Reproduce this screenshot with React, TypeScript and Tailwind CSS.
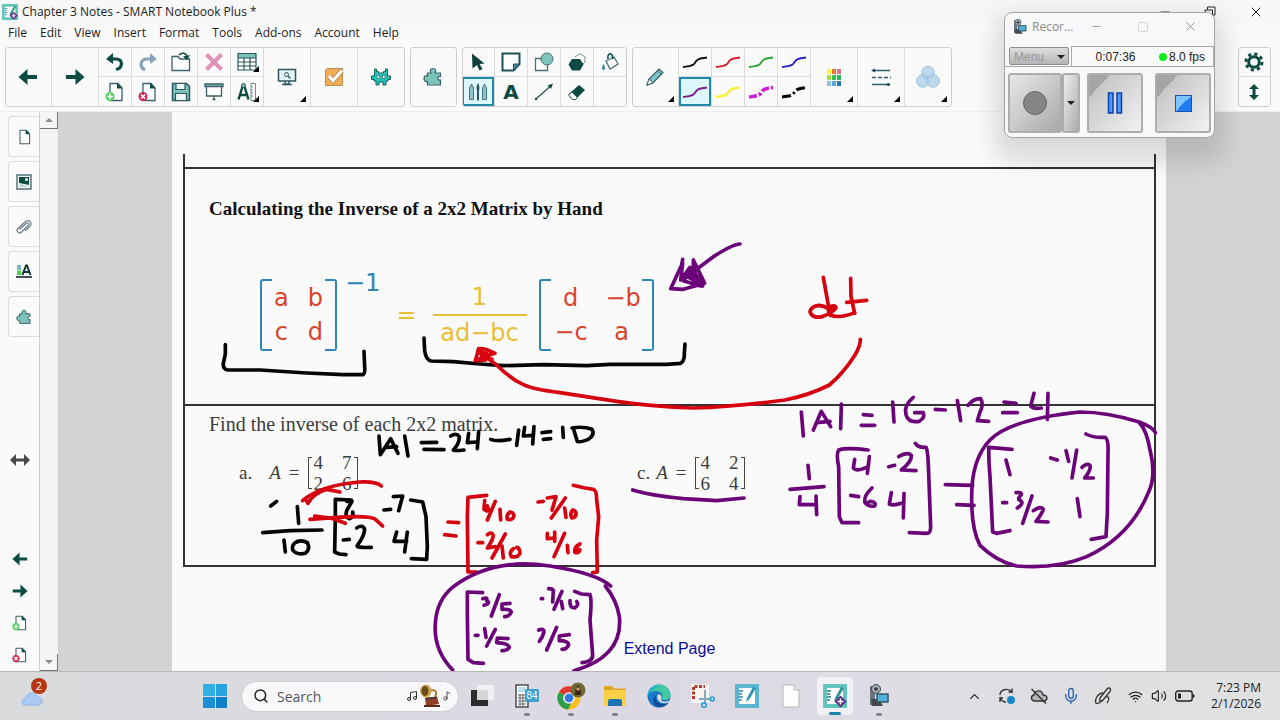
import React from "react";
import { ChevronUp, Mic, Minus, Music, Music2, Search, Square, Volume2, Wifi, X } from "lucide-react";

const menus = ["File", "Edit", "View", "Insert", "Format", "Tools", "Add-ons", "Account", "Help"];

/* ---------- toolbar pieces ---------- */

function Group({ children }: { children: React.ReactNode }) {
	return (
		<div className="flex h-[60px] shrink-0 overflow-hidden rounded-[3px] border border-[#cfcfcf] bg-[#fafafa]">
			{children}
		</div>
	);
}

function Corner() {
	return (
		<svg className="absolute right-1 bottom-1 size-1.5" viewBox="0 0 6 6">
			<path d="M6 0V6H0Z" fill="#000" />
		</svg>
	);
}

function Big({ label, more, children }: { label: string; more?: boolean; children: React.ReactNode }) {
	return (
		<button
			aria-label={label}
			className="relative flex h-full w-[47px] items-center justify-center border-r border-[#dadada] first:-ml-px last:-mr-px"
		>
			{children}
			{more && <Corner />}
		</button>
	);
}

function Column({ children }: { children: React.ReactNode }) {
	return (
		<div className="flex w-[33px] flex-col divide-y divide-[#dadada] border-r border-[#dadada] first:-ml-px last:-mr-px">
			{children}
		</div>
	);
}

function Small({ label, active, more, children }: { label: string; active?: boolean; more?: boolean; children?: React.ReactNode }) {
	return (
		<button
			aria-label={label}
			className={
				active
					? "relative flex h-[29px] w-full items-center justify-center bg-[#dcf8fc] shadow-[inset_0_0_0_2px_#2288a8]"
					: "relative flex h-[29px] w-full items-center justify-center"
			}
		>
			{children}
			{more && <Corner />}
		</button>
	);
}

/* ---------- icons ---------- */

function Arrow({ left, size }: { left?: boolean; size?: string }) {
	return (
		<svg className={size || "size-5"} viewBox="0 0 20 20">
			<path d={left ? "M.5 10L9.500 2V8H19V12H9.500V18Z" : "M19.500 10L10.500 2V8H1V12H10.500V18Z"} fill="#0c4b43" />
		</svg>
	);
}

function Turn({ redo }: { redo?: boolean }) {
	return (
		<svg className="size-5" viewBox="0 0 20 20">
			{redo ? (
				<g fill="none" stroke="#8ba3ba">
					<path d="M7 18C1 15 2 7 9 7H13" strokeWidth="3.200" />
					<path d="M12 1L19 7L12 12Z" fill="#8ba3ba" stroke="none" />
				</g>
			) : (
				<g fill="none" stroke="#0c4b43">
					<path d="M11 17.500C18 16 18.500 7 11 7H7" strokeWidth="3.200" />
					<path d="M8 1L1 7L8 12Z" fill="#0c4b43" stroke="none" />
				</g>
			)}
		</svg>
	);
}

function PageIcon({ badge, size }: { badge?: "add" | "del"; size?: string }) {
	return (
		<svg className={size || "size-5"} viewBox="0 0 20 20">
			<path d="M5 1.500H13L17 6V18.500H5Z" fill="#fff" stroke="#3c6069" strokeWidth="1.300" />
			<path d="M12 1V6.500H17.500Z" fill="#0c4b43" />
			{badge === "add" && (
				<g>
					<circle cx="5" cy="14.500" r="4.500" fill="#4fd05a" />
					<path d="M5 11.500V17.500M2 14.500H8" stroke="#fff" strokeWidth="1.500" />
				</g>
			)}
			{badge === "del" && (
				<g>
					<circle cx="5" cy="14.500" r="4.500" fill="#c92a54" />
					<path d="M3 12.500L7 16.500M7 12.500L3 16.500" stroke="#fff" strokeWidth="1.500" />
				</g>
			)}
		</svg>
	);
}

function OpenIcon() {
	return (
		<svg className="size-5" viewBox="0 0 20 20">
			<path d="M1 18.500V4.500H7L9 7H18.500V18.500Z" fill="#fff" stroke="#3c6069" strokeWidth="1.300" />
			<path d="M8 3C11 0 15 1 16 4" fill="none" stroke="#0c4b43" strokeWidth="1.600" />
			<path d="M12 4.500L19 3L16 8Z" fill="#0c4b43" />
		</svg>
	);
}

function DeleteIcon() {
	return (
		<svg className="size-5" viewBox="0 0 20 20">
			<path d="M2.500 2.500L17.500 17.500M17.500 2.500L2.500 17.500" stroke="#dd91b6" strokeWidth="4" />
		</svg>
	);
}

function TableIcon() {
	return (
		<svg className="size-5" viewBox="0 0 20 20">
			<path d="M1 1.500H19V18H1Z" fill="#fff" />
			<path d="M1 1.500H19V6H1Z" fill="#7cc4bb" />
			<path d="M1 1.500H19V18H1ZM1 6H19M1 10H19M1 14H19M7 6V18M13 6V18" fill="none" stroke="#2d5660" strokeWidth="1.200" />
		</svg>
	);
}

function SaveIcon() {
	return (
		<svg className="size-5" viewBox="0 0 20 20">
			<path d="M1.500 1.500H15.500L18.500 4.500V18.500H1.500Z" fill="#7cc4bb" stroke="#2d5660" strokeWidth="1.500" />
			<path d="M5 1.500H14V7.500H5ZM4.500 11.500H15.500V18.500H4.500Z" fill="#eef8f8" stroke="#2d5660" strokeWidth="1.200" />
		</svg>
	);
}

function ScreenIcon() {
	return (
		<svg className="size-5" viewBox="0 0 20 20">
			<path d="M2.500 4V14H17.500V4" fill="#fff" stroke="#3c6069" strokeWidth="1.300" />
			<path d="M1 2H19V4.500H1ZM10 14V17M8.500 17.500H11.500" fill="#7cc4bb" stroke="#3c6069" strokeWidth="1.300" />
		</svg>
	);
}

function MeasureIcon() {
	return (
		<svg className="size-5" viewBox="0 0 20 20">
			<path d="M6 3L1.500 17.500M7 3L11.500 17.500M3 13H10" fill="none" stroke="#0c4b43" strokeWidth="2.400" />
			<circle cx="6.500" cy="3.500" r="2" fill="#7cc4bb" stroke="#2d5660" />
			<path d="M14 1.500H18.500V18.500H14ZM14 5H16M14 8H16M14 11H16M14 14H16" fill="#fff" stroke="#6f8c93" />
		</svg>
	);
}

function MonitorIcon() {
	return (
		<svg className="size-5" viewBox="0 0 20 20">
			<path d="M1.500 2.500H18.500V14H1.500Z" fill="#e6f4f6" stroke="#2d5660" strokeWidth="1.500" />
			<path d="M8 14V17H12V14M5 17.500H15" fill="none" stroke="#2d5660" strokeWidth="1.500" />
			<circle cx="9.500" cy="7.500" r="2" fill="none" stroke="#2d5660" />
			<path d="M11 9L13.500 11.500" stroke="#2d5660" strokeWidth="1.500" />
		</svg>
	);
}

function CheckIcon() {
	return (
		<svg className="size-5" viewBox="0 0 20 20">
			<path d="M3 1.500H18.500V18.500H1.500V3Z" fill="#f2ad57" stroke="#b98a52" />
			<path d="M5 9L9 13.500L18 3.500" fill="none" stroke="#b98a52" strokeWidth="5" />
			<path d="M5 9L9 13.500L18 3.500" fill="none" stroke="#fff" strokeWidth="3.200" />
		</svg>
	);
}

function MonsterIcon() {
	return (
		<svg className="size-5" viewBox="0 0 20 20">
			<path
				d="M3.500 2H5.500V4.500H7.500V6H12.500V4.500H14.500V2H16.500V9H19.500V12.500H17V14H15V18H12V15H8V18H5V14H3V12.500H.5V9H3.500Z"
				fill="#27c1b8"
				stroke="#15605f"
			/>
			<path d="M6 8.500H8.500V11.500H6ZM11.500 8.500H14V11.500H11.500Z" fill="#fff" stroke="#15605f" strokeWidth=".6" />
		</svg>
	);
}

function PuzzleIcon({ size }: { size?: string }) {
	return (
		<svg className={size || "size-5"} viewBox="0 0 20 20">
			<path
				d="M4.500 6H8C6.500 3.500 7.500 1.500 10 1.500S13.500 3.500 12 6H17.500V9.500C14 8.500 14 14 17.500 13V18H4.500V14.500C2 15 1 13.500 1 11.500S2 8.500 4.500 9Z"
				fill="#7cc4bb"
				stroke="#3c6069"
				strokeWidth="1.200"
			/>
		</svg>
	);
}

function CursorIcon() {
	return (
		<svg className="size-5" viewBox="0 0 20 20">
			<path d="M4 1.500L16.500 11.500L11.500 12L14.500 17L11.500 18.500L9 13L4.500 16.500Z" fill="#0c3f3c" />
		</svg>
	);
}

function NoteIcon() {
	return (
		<svg className="size-5" viewBox="0 0 20 20">
			<path d="M1.500 1.500H18.500V12L12.500 18.500H1.500Z" fill="#fff" stroke="#1f5057" strokeWidth="2" />
			<path d="M18.500 12H12.500V18.500Z" fill="#3e8a92" stroke="#1f5057" />
		</svg>
	);
}

function ShapesIcon() {
	return (
		<svg className="size-5" viewBox="0 0 20 20">
			<path d="M1.500 6.500H13.500V18.500H1.500Z" fill="#fff" stroke="#4b6f79" strokeWidth="1.300" />
			<circle cx="13" cy="7" r="6" fill="#7cc4bb" stroke="#4b6f79" />
		</svg>
	);
}

function PolygonIcon() {
	return (
		<svg className="size-5" viewBox="0 0 20 20">
			<path d="M8 5L13 1.500L18 5V10L14 14" fill="none" stroke="#6e8a8e" />
			<path d="M5 7H13L16.500 12.500L13 18.500H5L1.500 12.500Z" fill="#0c4b43" />
		</svg>
	);
}

function FillIcon() {
	return (
		<svg className="size-5" viewBox="0 0 20 20">
			<path d="M6 9L14 5L18 12L10 17Z" fill="#fff" stroke="#4b6f79" strokeWidth="1.300" />
			<path d="M8 7C7 3 10 0 12 3L13 7" fill="none" stroke="#0c4b43" strokeWidth="1.600" />
			<path d="M3.500 12C5.500 15 5.500 18 3.500 18S1.500 15 3.500 12Z" fill="#3e8a92" />
		</svg>
	);
}

function PensIcon() {
	return (
		<svg className="size-5" viewBox="0 0 20 20">
			<path d="M1.500 6L3.500 2L5.500 6V17.500H1.500ZM14.500 6L16.500 2L18.500 6V17.500H14.500Z" fill="#8fc2cb" stroke="#4b6f79" />
			<path d="M10 1C12 5 11.500 6 11 9V18.500H9V9C8.500 6 8 5 10 1Z" fill="#2d5660" />
		</svg>
	);
}

function LetterIcon() {
	return <span className="font-['DejaVu_Sans',sans-serif] text-[20px] leading-5 font-bold text-[#0c4b43]">A</span>;
}

function LineIcon() {
	return (
		<svg className="size-5" viewBox="0 0 20 20">
			<path d="M2 17L16 4.500" stroke="#2d4f52" strokeWidth="1.200" />
			<path d="M19 1.500L17 7L13.500 3.500Z" fill="#0c4b43" />
			<circle cx="2" cy="17" r="1.200" fill="#0c4b43" />
		</svg>
	);
}

function EraserIcon() {
	return (
		<svg className="size-5" viewBox="0 0 20 20">
			<path d="M2 12L12 3L18 8L8.500 17.500Z" fill="#0c4b43" />
			<path d="M5 10L10.500 15.500L8.500 17.500H5.500L2 13.500V12Z" fill="#fff" stroke="#0c4b43" />
		</svg>
	);
}

function PencilIcon() {
	return (
		<svg className="size-5" viewBox="0 0 20 20">
			<path d="M2 18L4 12L14 2L18 5.500L8 16Z" fill="#7cc4cb" stroke="#3c6069" strokeWidth="1.200" />
			<path d="M2 18L4 12L8 16Z" fill="#fff" stroke="#3c6069" />
			<path d="M12.500 3.500L16.500 7.500" stroke="#3c6069" />
		</svg>
	);
}

function InkLine({ color, width, dash }: { color: string; width: number; dash?: string }) {
	return (
		<svg className="h-4 w-[26px]" viewBox="0 0 26 16">
			<path d="M1 13C8 12 11 12 12.500 9.500C15 5 17 4.500 25 3.500" fill="none" stroke={color} strokeWidth={width} strokeDasharray={dash} />
		</svg>
	);
}

function GearIcon() {
	return (
		<svg className="size-5" viewBox="0 0 20 20" fill="none" stroke="#0c4b43">
			<circle cx="10" cy="10" r="5.300" strokeWidth="3" />
			<circle cx="10" cy="10" r="8" strokeWidth="3" strokeDasharray="3.200 3.083" />
		</svg>
	);
}

function UpDownIcon() {
	return (
		<svg className="h-4 w-3" viewBox="0 0 12 16">
			<path d="M6 0L11 5H7.500V11H11L6 16L1 11H4.500V5H1Z" fill="#0c4b43" />
		</svg>
	);
}

const swatches = ["#fff14a", "#f0703c", "#d9748c", "#a9d84e", "#33c24e", "#2eb35a", "#8fc0e4", "#5aa7dd", "#287aa6"];

function SwatchIcon() {
	return (
		<span className="grid grid-cols-3 gap-px">
			{swatches.map((c) => (
				<i key={c} className="h-[5px] w-1" style={{ background: c }} />
			))}
		</span>
	);
}

function LinesIcon() {
	return (
		<svg className="h-5 w-5" viewBox="0 0 20 20">
			<path d="M2 3.500H19M1 17.500H17" stroke="#2d5f70" strokeWidth="1.300" />
			<path d="M1 10.500H20" stroke="#2d5f70" strokeWidth="1.500" strokeDasharray="4 2" />
			<path d="M0 3.500L4 1.500V5.500Z" fill="#1b4a5a" />
			<circle cx="17.500" cy="17.500" r="1.600" fill="#1b4a5a" />
		</svg>
	);
}

function BubblesIcon() {
	return (
		<svg className="size-6" viewBox="0 0 24 24" fill="#a9cde6" fillOpacity=".75" stroke="#8db9d8" strokeWidth=".7">
			<circle cx="12" cy="7.500" r="6.500" />
			<circle cx="6.800" cy="16" r="6.300" />
			<circle cx="17.200" cy="16" r="6.300" />
		</svg>
	);
}

function NotebookIcon({ size, badge }: { size: string; badge?: boolean }) {
	return (
		<svg className={size} viewBox="0 0 24 24">
			<path d="M0 0H24V24H0Z" fill={badge ? "#62c3bc" : "#5ab4d2"} />
			<path d="M4 4H20V20H4Z" fill="#fff" />
			<path d="M4 7H8M4 10H7M4 13H8M4 16H7" stroke={badge ? "#1d7c78" : "#2b86a6"} strokeWidth="1.300" />
			<path d="M18 3L12 14L11 18L14.500 15L21 4Z" fill={badge ? "#2f938f" : "#2f93b8"} />
			{badge && (
				<g>
					<path d="M17.500 11.500L23.500 17.500L17.500 23.500L11.500 17.500Z" fill="#5b2a82" />
					<path d="M17.500 14.500V20.500M14.500 17.500H20.500" stroke="#fff" strokeWidth="1.600" />
				</g>
			)}
		</svg>
	);
}

function CamcorderIcon({ size }: { size: string }) {
	return (
		<svg className={size} viewBox="0 0 24 24">
			<path d="M3 2H8V21H3Z" fill="#6d7680" />
			<circle cx="9" cy="5" r="4.500" fill="#a4adb5" stroke="#3c444c" />
			<circle cx="9" cy="5" r="1.800" fill="#2c3238" />
			<path d="M4 15H12L16 22H5Z" fill="#42494f" />
			<path d="M10 10H21V18H10Z" fill="#50b3dc" stroke="#3b5663" strokeWidth="1.500" />
		</svg>
	);
}

/* ---------- side panel ---------- */

function GalleryIcon() {
	return (
		<svg className="size-4" viewBox="0 0 16 16">
			<path d="M1 1H15V15H1Z" fill="#fff" stroke="#4b6f79" strokeWidth="1.400" />
			<path d="M3 3H13V11L3 9Z" fill="#0c4b43" />
			<circle cx="10.500" cy="5.500" r="1.500" fill="#fff" />
			<path d="M3 11L6 10L13 13H3Z" fill="#b9d6dc" />
		</svg>
	);
}

function ClipIcon() {
	return (
		<svg className="size-4" viewBox="0 0 16 16" fill="none" stroke="#6a838b" strokeWidth="1.300" strokeLinecap="round">
			<path d="M4 10L10 4.500C12 3 13.500 5 12 6.500L5.500 13C3 15.500-.5 12 2 9.500L9 3C12.500-.5 17 4 14 7L9.500 11.500" />
		</svg>
	);
}

function StyleIcon() {
	return (
		<svg className="size-4" viewBox="0 0 16 16">
			<path d="M1 1H5V6H1Z" fill="#7cb6c9" />
			<path d="M1 6.500H5V11H1Z" fill="#4fcf4f" />
			<path d="M0 13H16" stroke="#3d525b" strokeWidth="2" />
			<path d="M6.500 11L10 1.500H11L14.500 11M8 8H13" fill="none" stroke="#10343a" strokeWidth="2" />
		</svg>
	);
}

const tabs = [
	{ name: "Page Sorter", icon: <PageIcon size="size-4" /> },
	{ name: "Gallery", icon: <GalleryIcon /> },
	{ name: "Attachments", icon: <ClipIcon /> },
	{ name: "Properties", icon: <StyleIcon /> },
	{ name: "Add-ons", icon: <PuzzleIcon size="size-4" /> },
];

function SidePanel() {
	return (
		<aside className="flex w-10 shrink-0 flex-col border-r border-[#cfcfcf] bg-[#fafafa]">
			<div className="flex flex-col gap-1 pt-1 pl-2">
				{tabs.map((t) => (
					<button
						key={t.name}
						aria-label={t.name}
						className="flex h-[41px] items-center justify-center rounded-l-[4px] border border-r-0 border-[#dedbdb]"
					>
						{t.icon}
					</button>
				))}
			</div>
			<button aria-label="Resize panel" className="flex flex-1 items-center justify-center pt-10">
				<svg className="h-3 w-5" viewBox="0 0 20 12">
					<path d="M0 6L6 0V4.500H14V0L20 6L14 12V7.500H6V12Z" fill="#4a4a4a" />
				</svg>
			</button>
			<button aria-label="Previous page" className="flex h-8 items-center justify-center">
				<Arrow left size="size-4" />
			</button>
			<button aria-label="Next page" className="flex h-8 items-center justify-center">
				<Arrow size="size-4" />
			</button>
			<button aria-label="Add page" className="flex h-8 items-center justify-center">
				<PageIcon badge="add" size="size-4" />
			</button>
			<button aria-label="Delete page" className="flex h-8 items-center justify-center">
				<PageIcon badge="del" size="size-4" />
			</button>
		</aside>
	);
}

function ScrollBar() {
	return (
		<div className="flex w-[18px] shrink-0 flex-col justify-between bg-[#f3f3f3]">
			<button aria-label="Scroll up" className="flex h-[17px] items-center justify-center border-r border-b border-[#777] bg-[#f5f5f5]">
				<svg className="h-1 w-2" viewBox="0 0 8 4">
					<path d="M4 0L8 4H0Z" fill="#8d8d8d" />
				</svg>
			</button>
			<button aria-label="Scroll down" className="flex h-[17px] items-center justify-center border-r border-b border-[#777] bg-[#f5f5f5]">
				<svg className="h-1 w-2" viewBox="0 0 8 4">
					<path d="M4 4L0 0H8Z" fill="#8d8d8d" />
				</svg>
			</button>
		</div>
	);
}

/* ---------- ink on the page, three units to a pixel ---------- */

const BLACK = "#050505";
const RED = "#d6000f";
const PURPLE = "#6b0478";

const ink = [
	{
		color: BLACK, x: 24, y: 114,
		strokes: ["M136 584L136 612L130 640Q128 656 142 660L240 660L380 669L490 674L548 674Q556 672 554 650L552 604"],
	},
	{
		color: BLACK, x: 684, y: 354,
		strokes: ["M72 324L74 362Q78 390 94 393L160 395L240 402L310 407L430 404L560 407L630 403L800 403L842 400Q854 392 853 370L855 342"],
	},
	{
		color: PURPLE, x: 684, y: 354,
		strokes: [
			"M1020 42Q1000 42 940 80L880 125",
			"M848 88L845 105L812 176L850 178L914 160L880 90L880 120L908 168",
			"M848 100L842 150L870 112L902 168L850 152L868 128L890 155L862 140",
		],
	},
	{
		color: RED, x: 684, y: 354,
		strokes: [
			"M1270 142L1283 215L1292 256",
			"M1292 256Q1294 230 1256 226Q1232 230 1230 246Q1238 266 1266 260Q1296 250 1308 234Q1308 224 1290 230Q1280 244 1292 256Q1320 266 1364 248",
			"M1288 248L1304 232L1292 238",
			"M1352 145L1353 200L1364 250",
			"M1340 217L1400 211",
			"M1381 328Q1382 345 1365 375Q1330 430 1288 465Q1230 495 1155 510Q1000 530 880 534Q760 530 650 514L480 488Q400 478 370 464Q330 445 290 405L250 375",
			"M235 358Q245 350 285 370L250 380L276 388",
			"M236 356L226 392L256 390L236 362L262 372L240 385",
		],
	},
	{
		color: BLACK, x: 24, y: 864,
		strokes: [
			"M597 108L601 164L632 116L654 160", "M620 142L650 140", "M674 108L684 168",
			"M724 128L770 127", "M732 148L792 149",
			"M812 108Q830 98 838 110Q838 130 822 148Q812 154 852 150",
			"M866 100L862 128L890 126", "M896 94L892 146",
			"M932 118Q950 126 990 118", "M1016 90L1010 136",
			"M1034 82L1030 108L1058 106", "M1062 80L1058 132",
			"M1086 98L1112 95", "M1090 118L1112 116", "M1148 82L1150 112",
			"M1182 92L1192 124Q1200 128 1225 118Q1246 104 1236 88Q1210 78 1176 84",
			"M272 318L290 304", "M352 320L356 370", "M248 398L330 392L426 390",
			"M312 420L316 456", "M352 424Q334 432 338 450Q350 466 376 460Q392 448 382 428Q366 418 350 426",
			"M514 300L466 298L466 350L464 456L478 462L498 464",
			"M500 304L516 304L500 332Q494 352 508 356Q522 352 518 336",
			"M612 330L632 328", "M640 290L668 288L656 332",
			"M490 420L508 418", "M530 384Q548 372 554 388Q552 410 532 436Q526 444 574 442",
			"M650 396L642 424L680 424", "M682 396L674 456",
			"M692 300L728 306L738 350L742 440L740 478L694 476",
		],
	},
	{
		color: RED, x: 24, y: 864,
		strokes: [
			"M368 302Q420 256 540 246Q590 244 604 258", "M376 296L384 310Q400 280 440 268L480 276",
			"M390 358L470 352Q570 346 586 358L608 378", "M404 348L460 356L496 370",
			"M804 366L836 368", "M794 404L828 408",
			"M920 286L864 292L862 350L864 516L890 516",
			"M914 302L912 328Q922 336 926 330L922 318", "M946 304L922 360", "M960 328L962 360",
			"M990 336Q978 344 982 358Q1000 362 1002 346Q998 334 988 338",
			"M1074 306L1090 304", "M1102 294L1128 290L1116 330", "M1156 294L1114 354", "M1154 324L1158 352",
			"M1178 330Q1168 344 1176 354Q1190 352 1188 338Q1182 328 1176 332",
			"M894 428L908 428", "M922 404Q936 394 940 406Q938 422 922 444L946 440", "M976 402L936 474", "M966 438L970 474",
			"M1000 446Q986 456 994 470Q1012 474 1020 460Q1020 444 1010 442",
			"M1102 400L1102 416L1124 414", "M1124 396L1124 424", "M1154 400L1122 470", "M1162 436L1164 458",
			"M1200 432Q1182 440 1184 456Q1196 462 1200 450Q1196 444 1188 450",
			"M1180 256Q1220 266 1240 268Q1250 270 1250 300L1256 350L1250 420L1252 516L1238 518",
		],
	},
	{
		color: PURPLE, x: 24, y: 864,
		strokes: [
			"M818 810Q760 750 766 670Q770 600 820 560Q900 500 1010 492Q1060 490 1110 498Q1250 520 1292 558",
			"M1276 558Q1310 600 1318 650Q1330 770 1182 812",
			"M908 578L862 576L862 640L864 778L880 788L910 790",
			"M908 596Q924 590 920 602Q934 610 912 616", "M958 584L934 648",
			"M990 610L966 612L966 628Q990 626 994 636Q990 648 974 650",
			"M1084 596L1088 596", "M1106 566Q1118 566 1120 572L1118 606", "M1146 574L1122 628", "M1144 604L1148 626",
			"M1170 602Q1168 624 1184 624Q1198 614 1190 604",
			"M1184 574L1204 582L1230 584Q1236 600 1230 660L1238 766Q1238 786 1206 788",
			"M886 706L894 706", "M914 686L918 712", "M946 688L920 738",
			"M984 716L952 714L950 728Q986 730 988 742Q982 752 966 752",
			"M1076 690Q1092 684 1092 696Q1088 712 1078 724", "M1130 682L1100 750",
			"M1168 704L1138 708L1138 722Q1164 722 1166 734Q1160 748 1146 748",
		],
	},
	{
		color: PURPLE, x: 1284, y: 804,
		strokes: [
			"M98 330Q150 346 250 356L350 362L432 354",
			"M604 96L610 168", "M640 150L664 94L692 140", "M650 128L690 124", "M724 72L722 146",
			"M790 104L816 106", "M784 136L824 136", "M878 66L882 126",
			"M940 52Q910 76 918 104Q926 130 958 124Q976 112 970 98L944 98",
			"M624 256L628 296", "M570 328L672 320", "M600 350L598 374L644 374", "M648 348L650 404",
			"M804 210Q740 202 716 210Q708 222 716 260L718 410L726 428L776 428",
			"M764 238L760 264Q768 276 800 262", "M808 230L802 280",
			"M866 260L884 256", "M896 230Q924 214 934 226Q936 244 904 270L948 272",
			"M752 346L776 350", "M816 324Q792 346 794 366Q804 382 824 378Q830 366 812 364Q800 368 800 372",
			"M874 338L868 372Q880 378 904 370", "M912 340L910 414",
			"M946 190Q956 204 978 202Q984 210 986 280L992 440Q992 460 980 460L928 458",
		],
	},
	{
		color: PURPLE, x: 2184, y: 804,
		strokes: [
			"M106 88L136 90", "M172 62L182 122", "M204 76Q222 54 242 56Q252 72 240 96L232 122L266 124",
			"M312 66L348 70", "M308 98L352 98", "M402 40L392 78Q400 88 424 84", "M444 40L442 118",
			"M136 314L218 316", "M170 374L222 376",
			"M766 158Q760 142 718 126Q620 96 540 96Q330 118 270 180Q222 230 216 320Q210 440 240 496Q290 545 350 558Q470 568 560 530Q690 470 744 340Q770 290 750 210Q740 150 718 128",
			"M336 208L266 202Q266 250 270 290L278 456L290 460L330 452", "M318 240L330 284",
			"M452 234L472 240", "M498 212L506 244", "M530 210L516 294", "M546 262Q560 248 570 256Q574 270 554 294L580 294",
			"M308 368L320 368", "M348 338Q366 336 364 344Q352 356 358 360Q376 368 352 384", "M396 348L368 430",
			"M400 392Q424 376 430 388Q424 404 408 424L444 426", "M532 356L540 410",
			"M558 162Q580 174 616 172Q626 180 624 220L622 400L618 470L574 478",
		],
	},
];

function Ink() {
	return (
		<svg
			className="pointer-events-none absolute top-0 left-0 h-[559px] w-[994px]"
			viewBox="0 0 2982 1677"
			fill="none"
			strokeWidth="11"
			strokeLinecap="round"
			strokeLinejoin="round"
			role="img"
			aria-label="Pen notes"
		>
			{ink.map((layer, i) => (
				<g key={i} transform={`translate(${layer.x} ${layer.y})`} stroke={layer.color}>
					{layer.strokes.map((d) => (
						<path key={d} d={d} />
					))}
				</g>
			))}
		</svg>
	);
}

/* ---------- worksheet ---------- */

function Matrix({ cells, wide }: { cells: string[]; wide?: boolean }) {
	return (
		<span className="flex h-[72px] text-[#d8432b]">
			<i className="w-3 rounded-l-[3px] border-y-2 border-l-2 border-[#2d86b5]" />
			<span
				className={
					wide
						? "grid w-[91px] grid-cols-[32px_32px] content-center justify-between px-1 text-center leading-[34px]"
						: "grid w-[53px] grid-cols-[auto_auto] content-center justify-between px-0.5 text-center leading-[34px]"
				}
			>
				{cells.map((c) => (
					<span key={c}>{c}</span>
				))}
			</span>
			<i className="w-3 rounded-r-[3px] border-y-2 border-r-2 border-[#2d86b5]" />
		</span>
	);
}

function Problem({ label, gap, cells }: { label: string; gap: string; cells: string[] }) {
	return (
		<div className={gap}>
			<span>{label}</span>
			<span className="flex items-center gap-2">
				<i>A</i>
				<span>=</span>
				<span className="flex items-center">
					<i className="h-8 w-1 border-y border-l border-[#444]" />
					<span className="grid w-[42px] grid-cols-[auto_auto] justify-between px-0.5 leading-[21px]">
						{cells.map((c, i) => (
							<span key={i}>{c}</span>
						))}
					</span>
					<i className="h-8 w-1 border-y border-r border-[#444]" />
				</span>
			</span>
		</div>
	);
}

function Worksheet() {
	return (
		<main className="relative mx-auto w-[994px] shrink-0 overflow-hidden bg-[#fafafa] pt-[42px] pr-2.5 pl-[11px]">
			<div className="h-[13px] border-x-2 border-[#333]" />
			<section className="border-2 border-b-0 border-[#333] pt-7 pb-[53px] pl-6">
				<h1 className="font-['Liberation_Serif',serif] text-[19px] leading-6 font-bold text-[#111]">
					Calculating the Inverse of a 2x2 Matrix by Hand
				</h1>
				<div className="mt-[58px] flex items-center pl-[51px] font-['DejaVu_Sans',sans-serif] text-[24px] leading-[34px]">
					<Matrix cells={["a", "b", "c", "d"]} />
					<span className="-mt-2 self-start pl-2 leading-6 text-[#2d86b5]">−1</span>
					<span className="pl-4 text-[#e9bd35]">=</span>
					<span className="ml-4 flex w-[94px] flex-col text-center text-[#e9bd35]">
						<span className="border-b-2 border-[#e9bd35]">1</span>
						<span>ad−bc</span>
					</span>
					<span className="ml-3">
						<Matrix wide cells={["d", "−b", "−c", "a"]} />
					</span>
				</div>
			</section>
			<section className="h-[163px] border-2 border-[#333] pt-1.5 pl-6 font-['Liberation_Serif',serif] text-[20px] text-[#3c3c3c]">
				<p className="leading-6">Find the inverse of each 2x2 matrix.</p>
				<div className="mt-4 grid grid-cols-[398px_1fr] pl-[30px] text-[19px]">
					<Problem label="a." gap="flex items-center gap-[17px]" cells={["4", "7", "2", "6"]} />
					<Problem label="c." gap="flex items-center gap-1.5" cells={["4", "2", "6", "4"]} />
				</div>
			</section>
			<a href="#extend" className="mt-[70px] block text-center font-['Liberation_Sans',sans-serif] text-[16px] leading-6 text-[#0a0a9c]">
				Extend Page
			</a>
			<Ink />
		</main>
	);
}

/* ---------- recorder window ---------- */

function Recorder() {
	return (
		<div className="absolute top-3 right-[65px] flex h-[126px] w-[211px] flex-col rounded-lg border border-[#a5a5a5] bg-[#f8f8f8] shadow-[0_14px_24px_10px_rgba(0,0,0,0.13)]">
			<div className="flex h-[27px] items-center pr-4 pl-[7px] text-[#8d8d8d]">
				<CamcorderIcon size="size-4" />
				<span className="flex-1 pl-1 text-[12px]">Recor...</span>
				<button aria-label="Minimize recorder"><Minus size={13} strokeWidth={1.5} /></button>
				<button aria-label="Maximize recorder" className="ml-[34px] text-[#d4d4d4]"><Square size={12} strokeWidth={2} /></button>
				<button aria-label="Close recorder" className="ml-[34px]"><X size={15} strokeWidth={1.5} /></button>
			</div>
			<div className="mt-1.5 flex h-[21px] border-b border-[#a8a8a8] pl-1 font-['Liberation_Sans',sans-serif] text-[12px]">
				<div className="relative my-px mr-0.5 w-[60px]">
					<select
						aria-label="Menu"
						className="size-full appearance-none rounded-[2px] border border-[#8e8e8e] bg-linear-to-b from-[#dedede] to-[#b5b5b5] pl-1 text-[#969696]"
					>
						<option>Menu</option>
					</select>
					<svg className="pointer-events-none absolute top-2 right-1 h-1 w-2" viewBox="0 0 8 4">
						<path d="M0 0H8L4 4Z" fill="#222" />
					</svg>
				</div>
				<div className="flex flex-1 items-center border border-b-0 border-[#aaa] pr-2 text-[#222]">
					<span className="flex-1 text-center">0:07:36</span>
					<i className="mr-0.5 size-2 rounded-full bg-[#11ee1a]" />
					<span>8.0 fps</span>
				</div>
			</div>
			<div className="flex flex-1 items-center px-[3px] pt-0.5">
				<button aria-label="Record" className="flex h-[60px] w-[54px] items-center justify-center rounded-[3px] border-2 border-[#adadad] bg-linear-to-br from-[#e8e8e8] via-[#c9c9c9] to-[#a9a9a9]">
					<i className="size-6 rounded-full border border-[#666] bg-[#858585]" />
				</button>
				<button aria-label="Record options" className="flex h-[60px] w-[18px] items-center justify-center rounded-[3px] border-2 border-[#adadad] bg-linear-to-br from-[#ededed] to-[#adadad]">
					<svg className="h-1 w-2" viewBox="0 0 8 4">
						<path d="M0 0H8L4 4Z" fill="#222" />
					</svg>
				</button>
				<button aria-label="Pause" className="ml-[7px] flex h-[60px] w-14 items-center justify-center rounded-[3px] border-2 border-[#adadad] bg-linear-to-br from-[#a5a5a5] from-20% via-[#c8c8c8] via-20% to-[#f2f2f2]">
					<svg className="h-[22px] w-4" viewBox="0 0 16 22">
						<path d="M1.500 1H6V21H1.500ZM10 1H14.500V21H10Z" fill="#4c9bf5" stroke="#0b3fae" strokeWidth="1.500" />
					</svg>
				</button>
				<button aria-label="Stop" className="ml-auto flex h-[60px] w-14 items-center justify-center rounded-[3px] border-2 border-[#adadad] bg-linear-to-br from-[#a5a5a5] from-20% via-[#c8c8c8] via-20% to-[#f2f2f2]">
					<i className="size-[17px] border border-[#1b4fb0] bg-linear-to-br from-[#7cc4fb] from-50% to-[#1f7cf0] to-50%" />
				</button>
			</div>
		</div>
	);
}

/* ---------- taskbar ---------- */

function App84() {
	return (
		<svg className="size-6" viewBox="0 0 24 24">
			<path d="M1 1H13V23H1Z" fill="#fff" stroke="#4c4c4c" strokeWidth="1.500" />
			<path d="M3 3H11V8H3Z" fill="#b9e1f2" />
			<path d="M3 11H11M3 14H11M3 17H11M3 20H11M5 10V22M8 10V22" stroke="#666" />
			<rect x="10" y="5" width="14" height="13" rx="1.500" fill="#3e9fcd" />
			<text x="17" y="15" fontSize="10" textAnchor="middle" fill="#fff" fontFamily="Liberation Sans">84</text>
		</svg>
	);
}

function ChromeIcon() {
	return (
		<svg className="h-7 w-[30px]" viewBox="0 0 30 28">
			<circle cx="13" cy="16" r="11.500" fill="#fbc11c" />
			<path d="M13 16L3 10A11.500 11.500 0 0 1 23 10.300Z" fill="#e23a2e" />
			<path d="M13 16L3 10A11.500 11.500 0 0 0 12 27.500L17 18Z" fill="#2f9e4a" />
			<circle cx="13" cy="16" r="5.800" fill="#fff" />
			<circle cx="13" cy="16" r="4.400" fill="#3577e5" />
			<circle cx="22" cy="8" r="7.500" fill="#6b6a35" />
			<path d="M22 3C25 6 25 11 25 13H19C19 10 19 6 22 3Z" fill="#3f2416" />
			<circle cx="22" cy="7" r="1.800" fill="#c9986d" />
		</svg>
	);
}

function FolderIcon() {
	return (
		<svg className="size-6" viewBox="0 0 24 24">
			<path d="M1 2H9L11 4.500H23V22H1Z" fill="#e0a526" />
			<path d="M1 6H23V22H1Z" fill="#fbd044" />
			<path d="M5 22V17Q5 15 7 15H17Q19 15 19 17V22Z" fill="#1f74b8" />
		</svg>
	);
}

function EdgeIcon() {
	return (
		<svg className="size-6" viewBox="0 0 24 24">
			<circle cx="12" cy="12" r="11.500" fill="#1b78c6" />
			<path d="M1 9C3 2 9 0 13 .5C20 1 24 6 23.500 12C23 16 17 17 14.500 15C17 11 14 7 10 7C6 7 2 9 1 9Z" fill="#43c9a0" />
			<path d="M1 9C3 3 9 1 14 3C8 3 4 6 1 12Z" fill="#27a9d8" />
			<path d="M10 10C7 14 10 20 16 20C19 20 21 19 22 18C19 23 13 24 9 22C5 19 6 12 10 10Z" fill="#0f4f95" />
			<path d="M14.500 15C13 17 17 19 22 16.500L21.500 18.500C15 21 9 17 10.500 11C12 9 15 11 14.500 15Z" fill="#dcdbe4" />
		</svg>
	);
}

function SnipIcon() {
	return (
		<svg className="size-6" viewBox="0 0 24 24">
			<rect x="0" y="0" width="18" height="19" rx="1.500" fill="#f7f3f3" />
			<path d="M2.500 15V2.500H14" fill="none" stroke="#b23a2a" strokeWidth="3" strokeDasharray="3 1.500" />
			<path d="M14 6V20M8 15H20" stroke="#8aa7b5" strokeWidth="2" />
			<circle cx="13" cy="21" r="2.300" fill="none" stroke="#2a9fd8" strokeWidth="1.600" />
			<circle cx="21.300" cy="15" r="2" fill="none" stroke="#2a9fd8" strokeWidth="1.600" />
		</svg>
	);
}

function BlankFile() {
	return (
		<svg className="size-6" viewBox="0 0 24 24">
			<path d="M4 1H15L20 6V23H4Z" fill="#fdfdfd" stroke="#b5b5b5" />
			<path d="M15 1V6H20" fill="#ececec" stroke="#b5b5b5" />
		</svg>
	);
}

function Gramophone() {
	return (
		<svg className="size-6" viewBox="0 0 24 24">
			<path d="M7 14L19 12.500L21 20L8 22Z" fill="#8f3f26" />
			<path d="M6 22H22" stroke="#5e2818" strokeWidth="2" />
			<path d="M8 14.500L19 13.500" stroke="#333" strokeWidth="1.500" />
			<path d="M13 6C19 6 19 9 17 13" fill="none" stroke="#a67b2d" strokeWidth="2" />
			<path d="M10 1C15 4 15 10 9 14C5 14 2 10 2 6C3 2 6 0 10 1Z" fill="#d0a64c" />
			<ellipse cx="7" cy="7" rx="3.500" ry="5" fill="#6b4c1c" />
		</svg>
	);
}

const apps = [
	{ name: "Calculator", icon: <App84 />, open: true },
	{ name: "Chrome", icon: <ChromeIcon />, open: true },
	{ name: "File Explorer", icon: <FolderIcon />, open: true },
	{ name: "Edge", icon: <EdgeIcon /> },
	{ name: "Snipping Tool", icon: <SnipIcon /> },
	{ name: "SMART Notebook", icon: <NotebookIcon size="size-6" /> },
	{ name: "File", icon: <BlankFile /> },
	{ name: "SMART Notebook Plus", icon: <NotebookIcon size="size-6" badge />, active: true },
	{ name: "Recorder", icon: <CamcorderIcon size="size-6" />, open: true },
];

function Taskbar() {
	return (
		<footer className="flex h-[49px] shrink-0 items-center border-t border-[#b9b6be] bg-linear-to-r from-[#d9dbdc] via-[#dcd9e5] to-[#e0e1e1] pr-[19px]">
			<button aria-label="Weather" className="relative ml-5 h-7 w-[27px]">
				<svg className="absolute bottom-1 left-0 h-4 w-6" viewBox="0 0 24 18">
					<path d="M5 17C-1 17-1 10 5 9.500C6 2 16 1 18 8C25 8 25 17 19 17Z" fill="#a9c9f3" stroke="#8bb0e4" />
				</svg>
				<span className="absolute -top-1 right-0 flex size-4 items-center justify-center rounded-full bg-[#b6360f] text-[11px] text-white">2</span>
			</button>
			<button aria-label="Start" className="ml-[156px] grid size-6 grid-cols-2 gap-px">
				<i className="bg-[#34aee6]" />
				<i className="bg-[#2aa2df]" />
				<i className="bg-[#1c8fd6]" />
				<i className="bg-[#0d7ec9]" />
			</button>
			<label className="ml-3.5 flex h-[31px] w-[218px] items-center rounded-full border border-[#cfcdd4] bg-[#f8f8fa] pr-1.5 pl-[11px]">
				<Search size={16} strokeWidth={2.2} color="#222" />
				<input aria-label="Search" placeholder="Search" className="ml-2 w-0 flex-1 text-[14px] outline-none placeholder:text-[#555]" />
				<Music size={12} color="#333" />
				<Gramophone />
				<Music2 size={10} color="#333" />
			</label>
			<button aria-label="Task view" className="flex w-[46px] items-center justify-center">
				<svg className="size-6" viewBox="0 0 24 24">
					<path d="M1 6H18V22H1Z" fill="#2b2b2b" />
					<path d="M7 1H24V16H7Z" fill="#f3f3f3" fillOpacity=".85" />
				</svg>
			</button>
			{apps.map((a) => (
				<button
					key={a.name}
					aria-label={a.name}
					className={
						a.active
							? "relative mx-1 flex h-[38px] w-9 items-center justify-center rounded bg-[#f0f0f5]"
							: "relative flex h-[38px] w-11 items-center justify-center"
					}
				>
					{a.icon}
					{a.open && <i className="absolute -bottom-px h-[3px] w-1.5 rounded-full bg-[#85828c]" />}
					{a.active && <i className="absolute bottom-0 h-[3px] w-3 rounded-full bg-[#1b83ad]" />}
				</button>
			))}
			<div className="ml-auto flex items-center text-[#222]">
				<button aria-label="Hidden icons"><ChevronUp size={15} strokeWidth={2} /></button>
				<button aria-label="Sync" className="ml-4">
					<svg className="size-[18px]" viewBox="0 0 18 18" fill="none" stroke="#333" strokeWidth="1.400">
						<path d="M2 8C2 3 9 0 14 5V1.500M14 5H10.500M2 10C3 13 5 15 8 15M2 15V11H5" />
						<circle cx="13" cy="13" r="4" fill="#1b86c4" stroke="none" />
					</svg>
				</button>
				<button aria-label="Cloud offline" className="ml-3.5">
					<svg className="size-[18px]" viewBox="0 0 18 18" fill="none" stroke="#333" strokeWidth="1.400">
						<path d="M5 14C1 14 0 9 4 8C5 3 12 2 13 8C18 8 18 14 14 14Z" fill="#b5b5b5" />
						<path d="M1.500 2L16 16.500" />
					</svg>
				</button>
				<button aria-label="Microphone" className="ml-3.5"><Mic size={18} strokeWidth={1.8} color="#2c62ac" /></button>
				<button aria-label="Pen" className="ml-3.5">
					<svg className="size-[18px]" viewBox="0 0 18 18" fill="none" stroke="#333" strokeWidth="1.300" strokeLinejoin="round">
						<path d="M6 11L13 2Q15 0 16.500 2Q17 3 16 4.500L9 13L5.500 14Z" />
						<path d="M9 6C4 6 1 12 1.500 15C2 18 7 16 9 13M12 10C15 9 16 12 13 16" />
					</svg>
				</button>
				<button aria-label="Network" className="ml-4"><Wifi size={15} strokeWidth={2} /></button>
				<button aria-label="Volume" className="ml-2"><Volume2 size={16} strokeWidth={1.7} /></button>
				<button aria-label="Battery" className="ml-2">
					<svg className="h-3 w-5" viewBox="0 0 20 12">
						<rect x=".7" y="1" width="16.500" height="10" rx="2.500" fill="none" stroke="#222" strokeWidth="1.400" />
						<path d="M3 3.500H6V8.500H3ZM18 4.500H19.500V7.500H18Z" fill="#222" />
					</svg>
				</button>
				<div className="ml-4 w-[50px] text-[12px] leading-4 whitespace-nowrap">
					<div className="flex justify-end">7:23 PM</div>
					<div className="flex justify-end">2/1/2026</div>
				</div>
			</div>
		</footer>
	);
}

export default function App() {
	return (
		<div className="relative flex min-h-screen flex-col bg-[#fafafa] font-['Open_Sans',sans-serif] text-[#1c1c1c]">
			<header className="flex h-6 items-center bg-[#f7f7f7] pr-4 pl-0.5 text-[12px]">
				<NotebookIcon size="size-4" badge />
				<span className="flex-1 pl-1">Chapter 3 Notes - SMART Notebook Plus *</span>
				<button aria-label="Minimize"><Minus size={14} strokeWidth={1.5} /></button>
				<button aria-label="Restore" className="ml-8">
					<svg className="size-3" viewBox="0 0 12 12" fill="none" stroke="#222">
						<path d="M1 4H8.500V11.500H1ZM3.500 3.500V1H11V9H9" />
					</svg>
				</button>
				<button aria-label="Close" className="ml-8"><X size={16} strokeWidth={1.5} /></button>
			</header>
			<nav className="flex h-[18px] items-center gap-[13px] pl-2 text-[12px]">
				{menus.map((m) => (
					<button key={m}>{m}</button>
				))}
			</nav>
			<div className="flex h-[70px] items-start gap-[5px] border-b border-[#ededed] pt-[5px] pr-[9px] pl-[5px]">
				<Group>
					<Big label="Previous page"><Arrow left /></Big>
					<Big label="Next page"><Arrow /></Big>
					<Column>
						<Small label="Undo"><Turn /></Small>
						<Small label="Add page"><PageIcon badge="add" /></Small>
					</Column>
					<Column>
						<Small label="Redo"><Turn redo /></Small>
						<Small label="Delete page"><PageIcon badge="del" /></Small>
					</Column>
					<Column>
						<Small label="Open"><OpenIcon /></Small>
						<Small label="Save"><SaveIcon /></Small>
					</Column>
					<Column>
						<Small label="Delete"><DeleteIcon /></Small>
						<Small label="Screen shade"><ScreenIcon /></Small>
					</Column>
					<Column>
						<Small label="Table" more><TableIcon /></Small>
						<Small label="Measurement tools" more><MeasureIcon /></Small>
					</Column>
					<Big label="View screens" more><MonitorIcon /></Big>
					<Big label="Response"><CheckIcon /></Big>
					<Big label="Lab activities"><MonsterIcon /></Big>
				</Group>
				<Group>
					<Big label="Add-ons"><PuzzleIcon /></Big>
				</Group>
				<Group>
					<Column>
						<Small label="Select"><CursorIcon /></Small>
						<Small label="Pens" active><PensIcon /></Small>
					</Column>
					<Column>
						<Small label="Note"><NoteIcon /></Small>
						<Small label="Text"><LetterIcon /></Small>
					</Column>
					<Column>
						<Small label="Shapes"><ShapesIcon /></Small>
						<Small label="Lines"><LineIcon /></Small>
					</Column>
					<Column>
						<Small label="Polygons"><PolygonIcon /></Small>
						<Small label="Eraser"><EraserIcon /></Small>
					</Column>
					<Column>
						<Small label="Fill"><FillIcon /></Small>
						<Small label="Empty slot" />
					</Column>
				</Group>
				<Group>
					<Big label="Pen type" more><PencilIcon /></Big>
					<Column>
						<Small label="Black pen"><InkLine color="#111" width={1.8} /></Small>
						<Small label="Purple pen" active><InkLine color="#7a1a8c" width={1.8} /></Small>
					</Column>
					<Column>
						<Small label="Red pen"><InkLine color="#d3202a" width={1.8} /></Small>
						<Small label="Yellow highlighter"><InkLine color="#f7f23c" width={2.5} /></Small>
					</Column>
					<Column>
						<Small label="Green pen"><InkLine color="#2fa336" width={1.8} /></Small>
						<Small label="Magenta dashes"><InkLine color="#cc1fd0" width={3.5} dash="8 2 3 2" /></Small>
					</Column>
					<Column>
						<Small label="Blue pen"><InkLine color="#2a22b8" width={1.8} /></Small>
						<Small label="Black dashes"><InkLine color="#000" width={3} dash="9 3 2 3" /></Small>
					</Column>
					<Big label="Colors" more><SwatchIcon /></Big>
					<Big label="Line style" more><LinesIcon /></Big>
					<Big label="Transparency" more><BubblesIcon /></Big>
				</Group>
				<div className="ml-auto">
					<Group>
						<Column>
							<Small label="Settings"><GearIcon /></Small>
							<Small label="Move toolbar"><UpDownIcon /></Small>
						</Column>
					</Group>
				</div>
			</div>
			<div className="flex flex-1">
				<SidePanel />
				<ScrollBar />
				<div className="flex flex-1 bg-[#d3d3d3]">
					<Worksheet />
				</div>
			</div>
			<Taskbar />
			<Recorder />
		</div>
	);
}
